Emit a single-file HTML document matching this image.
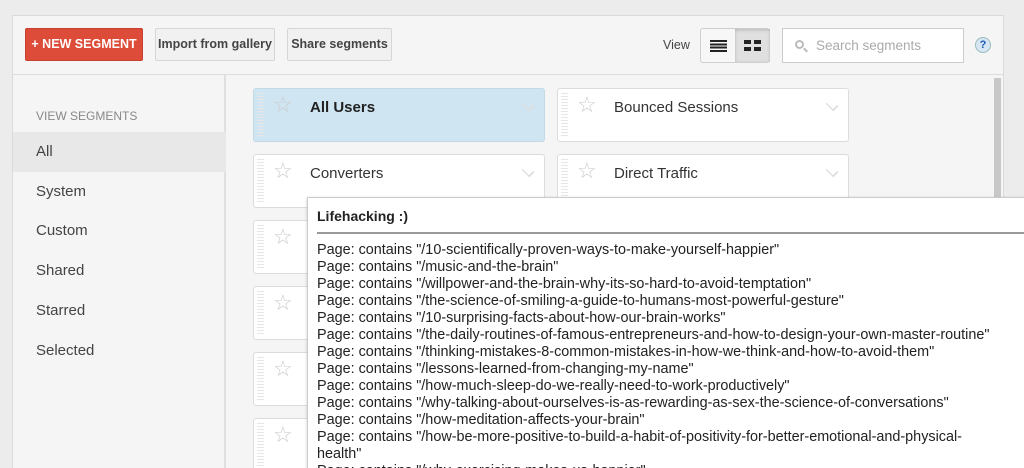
<!DOCTYPE html>
<html style="overflow:hidden;width:1024px;height:468px"><head><style>
*{box-sizing:border-box;margin:0;padding:0}
body{width:1024px;height:468px;overflow:hidden;background:#ececec;font-family:"Liberation Sans",Arial,sans-serif;position:relative}
.panel{position:absolute;left:12px;top:15px;width:992px;height:460px;background:#f5f5f5;border:1px solid #dadada}
.btn{position:absolute;top:12px;height:33px;border:1px solid #d6d6d6;background:#f1f1f1;border-radius:2px;font-size:12.5px;font-weight:bold;color:#444;line-height:31px;text-align:center}
.toolbar{position:absolute;left:0;top:0;width:990px;height:59px;border-bottom:1px solid #dcdcdc}
.side{position:absolute;left:0;top:59px;width:213px;height:400px;border-right:2px solid #e0e0e0}
.side div{position:absolute;left:0;width:213px;height:40px;line-height:40px;padding-left:23px;font-size:15px;color:#444}
.card{position:absolute;width:292px;height:54px;background:#fff;border:1px solid #dcdcdc;border-radius:3px}
.card .grip{position:absolute;left:3px;top:4px;width:7px;bottom:4px;background:repeating-linear-gradient(#e6e6e6 0 1px,transparent 1px 3px)}
.card .st{position:absolute;left:19px;top:3px;font-size:22px;color:#ccc}
.card .t{position:absolute;left:56px;top:10px;font-size:15px;color:#333}
.card .ch{position:absolute;right:10px;top:10px;width:12px;height:12px;border-right:2px solid #ddd;border-bottom:2px solid #ddd;transform:rotate(45deg) scale(.9,.6)}
.tip{position:absolute;left:307px;top:197px;width:730px;height:290px;background:#fff;border:1px solid #ccc;box-shadow:0 1px 3px rgba(0,0,0,.2);padding:10px 9px;font-size:14.4px;color:#222}
.tip h4{font-size:14px;font-weight:bold;padding-bottom:8px;border-bottom:2px solid #999;margin-bottom:8px;width:720px}
.tip p{line-height:17px}
</style></head><body>
<div class="panel">
 <div class="toolbar">
  <div class="btn" style="left:12px;width:118px;background:#dd4b39;border-color:#c5402f;color:#fff">+ NEW SEGMENT</div>
  <div class="btn" style="left:142px;width:120px">Import from gallery</div>
  <div class="btn" style="left:274px;width:105px">Share segments</div>
  <div style="position:absolute;left:650px;top:22px;font-size:12.5px;color:#444">View</div>
  <div style="position:absolute;left:687px;top:12px;width:70px;height:35px;border:1px solid #cfcfcf;border-radius:3px;background:#f7f7f7">
   <div style="position:absolute;left:9px;top:11px;width:17px;height:12px;background:repeating-linear-gradient(#222 0 2px,transparent 2px 3.3px)"></div>
   <div style="position:absolute;left:34px;top:0;width:35px;height:33px;background:#e0e0e0;box-shadow:inset 0 1px 3px rgba(0,0,0,.2)">
    <div style="position:absolute;left:9px;top:11px;width:7px;height:4px;background:#222"></div><div style="position:absolute;left:19px;top:11px;width:7px;height:4px;background:#222"></div>
    <div style="position:absolute;left:9px;top:18px;width:7px;height:4px;background:#222"></div><div style="position:absolute;left:19px;top:18px;width:7px;height:4px;background:#222"></div>
   </div></div>
  <div style="position:absolute;left:769px;top:12px;width:182px;height:35px;border:1px solid #ccc;background:#fff;font-size:13.5px;color:#aaa;line-height:33px;padding-left:33px">Search segments
   <div style="position:absolute;left:12px;top:11px;width:9px;height:9px;border:2px solid #bbb;border-radius:50%"></div><div style="position:absolute;left:20px;top:20px;width:5px;height:2px;background:#bbb;transform:rotate(45deg)"></div></div>
  <div style="position:absolute;left:962px;top:21px;width:16px;height:16px;border-radius:50%;background:#d6e6f5;border:1px solid #9bb;color:#1a5bb5;font-size:11px;font-weight:bold;text-align:center;line-height:14px">?</div>
 </div>
 <div class="side">
  <div style="top:26px;font-size:12px;color:#888;height:30px;line-height:30px">VIEW SEGMENTS</div>
  <div style="top:57px;background:#e8e8e8">All</div>
  <div style="top:97px">System</div>
  <div style="top:136px">Custom</div>
  <div style="top:176px">Shared</div>
  <div style="top:216px">Starred</div>
  <div style="top:256px">Selected</div>
 </div>
 <div style="position:absolute;left:981px;top:62px;width:7px;height:400px;background:#c8c8c8"></div>
</div>
<div class="card" style="left:253px;top:88px;background:#cfe5f2;border-color:#c3d9e6"><div class="grip"></div><div class="st">☆</div><div class="t" style="font-weight:bold;color:#222">All Users</div><div class="ch"></div></div>
<div class="card" style="left:557px;top:88px"><div class="grip"></div><div class="st">☆</div><div class="t">Bounced Sessions</div><div class="ch"></div></div>
<div class="card" style="left:253px;top:154px"><div class="grip"></div><div class="st">☆</div><div class="t">Converters</div><div class="ch"></div></div>
<div class="card" style="left:557px;top:154px"><div class="grip"></div><div class="st">☆</div><div class="t">Direct Traffic</div><div class="ch"></div></div>
<div class="card" style="left:253px;top:220px"><div class="grip"></div><div class="st">☆</div></div>
<div class="card" style="left:253px;top:286px"><div class="grip"></div><div class="st">☆</div></div>
<div class="card" style="left:253px;top:352px"><div class="grip"></div><div class="st">☆</div></div>
<div class="card" style="left:253px;top:418px"><div class="grip"></div><div class="st">☆</div></div>
<div class="tip"><h4>Lifehacking :)</h4>
<p>Page: contains "/10-scientifically-proven-ways-to-make-yourself-happier"</p>
<p>Page: contains "/music-and-the-brain"</p>
<p>Page: contains "/willpower-and-the-brain-why-its-so-hard-to-avoid-temptation"</p>
<p>Page: contains "/the-science-of-smiling-a-guide-to-humans-most-powerful-gesture"</p>
<p>Page: contains "/10-surprising-facts-about-how-our-brain-works"</p>
<p>Page: contains "/the-daily-routines-of-famous-entrepreneurs-and-how-to-design-your-own-master-routine"</p>
<p>Page: contains "/thinking-mistakes-8-common-mistakes-in-how-we-think-and-how-to-avoid-them"</p>
<p>Page: contains "/lessons-learned-from-changing-my-name"</p>
<p>Page: contains "/how-much-sleep-do-we-really-need-to-work-productively"</p>
<p>Page: contains "/why-talking-about-ourselves-is-as-rewarding-as-sex-the-science-of-conversations"</p>
<p>Page: contains "/how-meditation-affects-your-brain"</p>
<p>Page: contains "/how-be-more-positive-to-build-a-habit-of-positivity-for-better-emotional-and-physical-<br>health"</p>
<p>Page: contains "/why-exercising-makes-us-happier"</p>
</div>
</body></html>
